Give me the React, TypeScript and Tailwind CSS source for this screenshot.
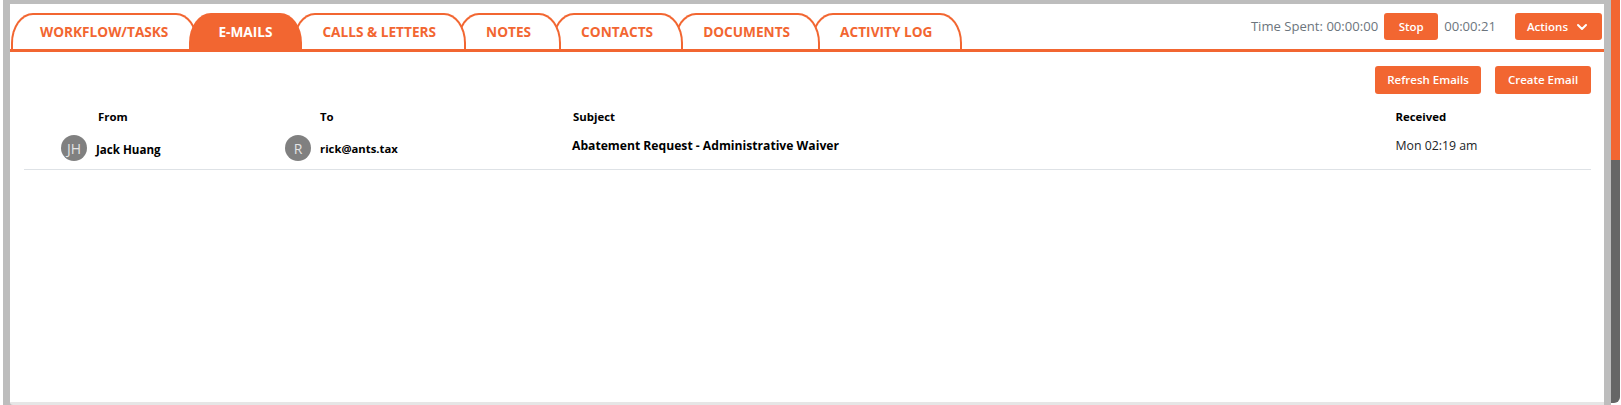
import { ChevronDown } from 'lucide-react'

const tabs = [
  { label: 'WORKFLOW/TASKS', z: 'z-[7]' },
  { label: 'E-MAILS', z: 'z-[8]', active: true },
  { label: 'CALLS & LETTERS', z: 'z-[6]' },
  { label: 'NOTES', z: 'z-[5]' },
  { label: 'CONTACTS', z: 'z-[4]' },
  { label: 'DOCUMENTS', z: 'z-[3]' },
  { label: 'ACTIVITY LOG', z: 'z-[2]' },
]

const rowGrid = 'grid grid-cols-[296px_253px_822.5px_1fr]'

function Avatar({ initials }: { initials: string }) {
  return (
    <span className="flex h-[26px] w-[26px] items-center justify-center rounded-full bg-[#808080] text-[14px] text-[#e4e4e4]">
      {initials}
    </span>
  )
}

function OrangeButton({ children, className }: { children: React.ReactNode; className: string }) {
  return (
    <button className={`flex items-center justify-center rounded-[3px] bg-[#f26631] text-[11.5px] font-semibold text-white ${className}`}>
      {children}
    </button>
  )
}

export default function App() {
  return (
    <div className="flex h-[405px] w-[1621px] overflow-hidden bg-white pl-[3px] font-['Open_Sans',sans-serif]">
      {/* Gray frame around the panel */}
      <div className="flex-1 bg-[#bdbdbd] px-[7px] pt-[4px]">
        <div className="h-full w-full rounded-bl-[3px] border-b-[3px] border-[#e6e6e6] bg-white">
          {/* Tabs + timer */}
          <div className="flex h-[48px] items-end justify-between border-b-[3px] border-[#f26631] pl-[1px]">
            <div className="flex">
              {tabs.map((tab) => (
                <div
                  key={tab.label}
                  className={`relative -mr-[9px] flex h-[36px] items-center rounded-tl-[22px_30px] rounded-tr-[22px_30px] border-x-2 border-t-2 border-[#f26631] pr-[28px] pl-[27px] text-[13.65px] font-bold whitespace-nowrap ${tab.z} ${
                    tab.active ? 'bg-[#f26631] text-white' : 'bg-white text-[#f26631]'
                  }`}
                >
                  {tab.label}
                </div>
              ))}
            </div>
            <div className="flex items-center self-start pt-[9px] pr-[2px] text-[13.1px] text-[#6c757d]">
              <span>Time Spent: 00:00:00</span>
              <OrangeButton className="ml-[6px] h-[27px] w-[54px]">Stop</OrangeButton>
              <span className="ml-[6px]">00:00:21</span>
              <OrangeButton className="ml-[19px] h-[27px] w-[87px] gap-[6px]">
                Actions
                <ChevronDown size={16} strokeWidth={3} />
              </OrangeButton>
            </div>
          </div>

          {/* Email actions */}
          <div className="mt-[14px] flex justify-end gap-[14px] pr-[13px]">
            <OrangeButton className="h-[28px] w-[106px]">Refresh Emails</OrangeButton>
            <OrangeButton className="h-[28px] w-[96px]">Create Email</OrangeButton>
          </div>

          {/* Emails table */}
          <div className="mt-[13px] ml-[14px] w-[1567px] text-black">
            <div className={`${rowGrid} h-[20px] items-center text-[11.4px] font-bold`}>
              <span className="pl-[74px]">From</span>
              <span>To</span>
              <span>Subject</span>
              <span>Received</span>
            </div>
            <div className={`${rowGrid} h-[43px] border-b border-[#dee2e6]`}>
              <div className="flex items-start gap-[9px] pt-[8px] pl-[37px]">
                <Avatar initials="JH" />
                <span className="pt-[6px] text-[11.6px] font-bold">Jack Huang</span>
              </div>
              <div className="-ml-[35px] flex items-start gap-[9px] pt-[8px]">
                <Avatar initials="R" />
                <span className="pt-[6px] text-[11.3px] font-bold">rick@ants.tax</span>
              </div>
              <span className="-ml-[1px] pt-[10px] text-[12.15px] font-bold">Abatement Request - Administrative Waiver</span>
              <span className="pt-[10px] text-[12.3px] text-[#212529]">Mon 02:19 am</span>
            </div>
          </div>
        </div>
      </div>

      {/* Scrollbar */}
      <div className="mr-[1px] flex h-[403px] w-[9px] flex-col">
        <div className="h-[160px] bg-[#f26631]" />
        <div className="flex-1 rounded-br-[6px] bg-[#666666]" />
      </div>
    </div>
  )
}
